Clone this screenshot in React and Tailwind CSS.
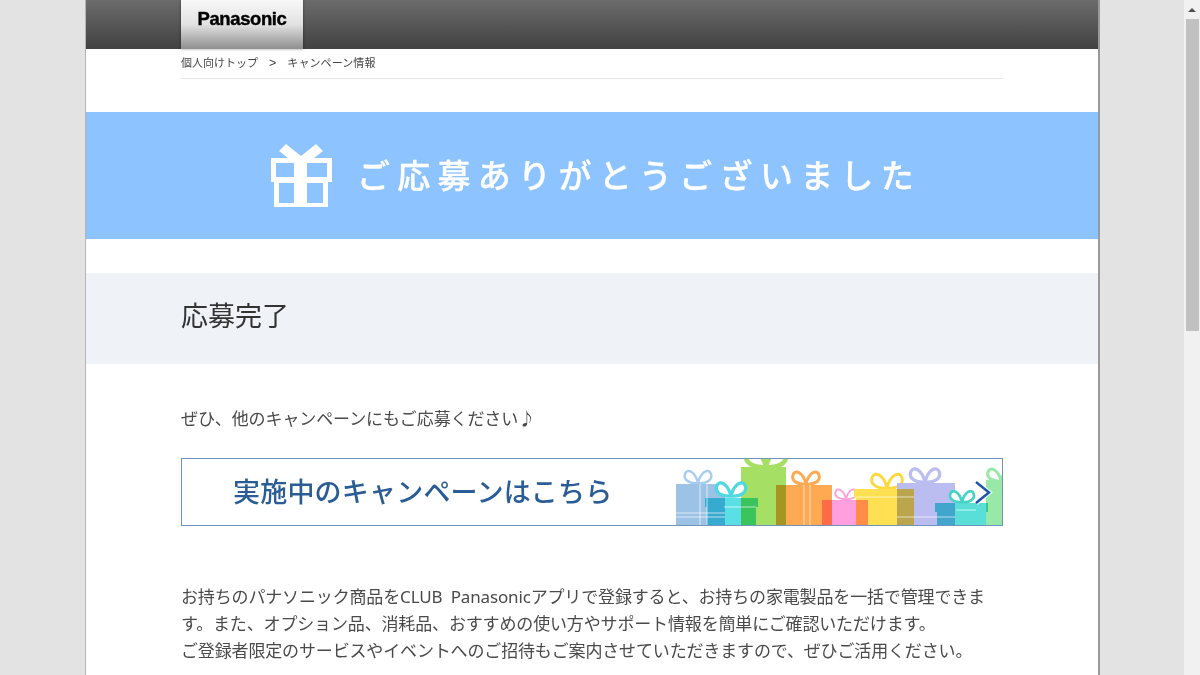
function GiftIcon() {
  return (
    <svg width="62" height="63" viewBox="0 0 62 63" className="shrink-0">
      <path d="M16 0l15 12L46 0l7 7-9 7H18L9 7z" fill="#fff" />
      <path fillRule="evenodd" fill="#fff" d="M1 14h61v24h-4v25H4V38H1zM6 19v14h18V19zM37 19v14h20V19zM9 39v20h15V39zM37 39v20h16V39z" />
    </svg>
  )
}

function Bow({ x, y, color, s = 1, w = 2.5, fill = 'none' }) {
  return (
    <path
      transform={`translate(${x} ${y}) scale(${s})`}
      d="M0 0C-8 1-15-3-13-9s10-3 13 9c3-12 11-15 13-9s-5 10-13 9z"
      fill={fill}
      stroke={color}
      strokeWidth={w}
    />
  )
}

// the row of presents on the right of the campaign banner
function GiftArt() {
  return (
    <svg width="327" height="66" viewBox="676 459 327 66" className="absolute right-0 bottom-0">
      <Bow x={699} y={483} color="#a9cdf0" />
      <Bow x={767} y={467} color="#a5e065" s={1.5} w={3} />
      <Bow x={807} y={484} color="#ffaa52" w={3} />
      <Bow x={847} y={499} color="#ff9fdd" s={0.8} />
      <Bow x={888} y={488} color="#ffd83d" s={1.15} w={2.5} />
      <Bow x={926} y={482} color="#bbbdf0" s={1.1} w={3} />
      <Bow x={1002} y={481} color="#98e8a8" w={3} />

      <g className="isolate">
        <rect x="677" y="484" width="49" height="41" fill="#9cc3e6" className="mix-blend-multiply" />
        <rect x="708" y="507" width="49" height="18" fill="#5adfe6" className="mix-blend-multiply" />
        <rect x="706" y="498" width="53" height="9" fill="#5adfe6" className="mix-blend-multiply" />
        <rect x="742" y="467" width="45" height="58" fill="#a5e065" className="mix-blend-multiply" />
        <rect x="777" y="485" width="56" height="40" fill="#ffaa52" className="mix-blend-multiply" />
        <rect x="823" y="500" width="46" height="25" fill="#ff9fdd" className="mix-blend-multiply" />
        <rect x="857" y="498" width="58" height="27" fill="#ffe052" className="mix-blend-multiply" />
        <rect x="855" y="489" width="60" height="9" fill="#ffe052" className="mix-blend-multiply" />
        <rect x="898" y="483" width="58" height="42" fill="#bbbdf0" className="mix-blend-multiply" />
        <rect x="938" y="512" width="49" height="13" fill="#5adfd8" className="mix-blend-multiply" />
        <rect x="936" y="503" width="53" height="9" fill="#5adfd8" className="mix-blend-multiply" />
        <rect x="987" y="480" width="16" height="45" fill="#98e8a8" className="mix-blend-multiply" />
      </g>

      <Bow x={732} y={496} color="#4fd8e0" s={1.1} w={3} fill="#fff" />
      <Bow x={963} y={502} color="#45d3c5" s={0.9} w={3} fill="#fff" />

      <path d="M677 513h49M677 517h49M856 497h59M898 517h58M725 507h32M708 484v41M701 484v41M805 485v40M811 485v40M957 510h20" stroke="#fff" strokeOpacity="0.65" strokeWidth="1" fill="none" />
      <path d="M977 482l13 10.5-13 10.5" fill="none" stroke="#fff" strokeWidth="5" strokeOpacity="0.7" />
      <path d="M977 482l13 10.5-13 10.5" fill="none" stroke="#1a56a8" strokeWidth="2.4" />
    </svg>
  )
}

export default function App() {
  return (
    <div className="h-[675px] overflow-hidden flex bg-[#e3e3e3] font-['Noto_Sans','Noto_Sans_CJK_JP','Liberation_Sans',sans-serif]">
      <div className="flex-1 min-w-0 pl-[85px] pr-[84px]">
        <div className="h-[675px] bg-white border-l border-r-2 border-l-[#b5b5b5] border-r-[#999] overflow-hidden">
          <header className="h-[49px] bg-gradient-to-b from-[#6c6c6c] to-[#424242] pl-[95px]">
            <div className="w-[122px] h-[49px] bg-gradient-to-b from-[#f8f8f8] via-[#e2e2e2] to-[#8f8f8f] shadow-[0_0_3px_rgba(0,0,0,0.4)] flex items-center justify-center pb-[12px]">
              <span className="font-['Liberation_Sans',sans-serif] text-[18.5px] font-bold tracking-[-0.4px] text-black [-webkit-text-stroke:0.4px_black]">Panasonic</span>
            </div>
          </header>

          <div className="mx-[95px] h-[30px] border-b border-[#e5e5e5] flex items-center text-[11px] text-[#444]">
            <span>個人向けトップ</span>
            <span className="mx-[11px] text-[12.5px] font-['Liberation_Sans',sans-serif]">&gt;</span>
            <span className="tracking-[0.1px]">キャンペーン情報</span>
          </div>

          <div className="mt-[33px] h-[127px] bg-[#8dc3ff] flex items-center justify-center gap-[25px]">
            <GiftIcon />
            <h1 className="text-[33px] font-medium tracking-[7.3px] mr-[-7px] text-white whitespace-nowrap [-webkit-text-stroke:0.3px_white]">ご応募ありがとうございました</h1>
          </div>

          <div className="mt-[34px] h-[91px] bg-[#eff2f7] flex items-center px-[95px] pb-[5px]">
            <h2 className="text-[27px] font-normal text-[#333]">応募完了</h2>
          </div>

          <div className="px-[95px]">
            <p className="mt-[41px] text-[17px] leading-[27px] tracking-[-0.1px] text-[#4a4a4a]">ぜひ、他のキャンペーンにもご応募ください♪</p>

            <div className="relative mt-[26px] h-[68px] border border-[#6f93bd] flex items-center pl-[51px] overflow-hidden">
              <span className="text-[27px] font-medium tracking-[0.2px] text-[#2a5d96] whitespace-nowrap">実施中のキャンペーンはこちら</span>
              <GiftArt />
            </div>

            <p className="mt-[57px] text-[17px] leading-[27px] tracking-[-0.15px] [word-spacing:4px] text-[#4a4a4a]">
              お持ちのパナソニック商品をCLUB Panasonicアプリで登録すると、お持ちの家電製品を一括で管理できます。また、オプション品、消耗品、おすすめの使い方やサポート情報を簡単にご確認いただけます。
              <br />
              ご登録者限定のサービスやイベントへのご招待もご案内させていただきますので、ぜひご活用ください。
            </p>
          </div>
        </div>
      </div>

      <div className="w-[16px] shrink-0 bg-[#f1f1f1] flex flex-col">
        <div className="h-[19px] flex items-center justify-center">
          <div className="w-0 h-0 border-x-[4px] border-x-transparent border-b-[4px] border-b-[#505050]" />
        </div>
        <div className="h-[312px] ml-[2px] mr-[1px] bg-[#c1c1c1]" />
      </div>
    </div>
  )
}
